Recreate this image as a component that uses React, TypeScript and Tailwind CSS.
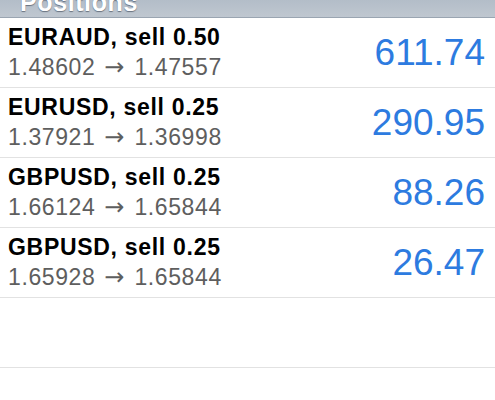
const positions = [
  { symbol: 'EURAUD', side: 'sell', volume: '0.50', open: '1.48602', current: '1.47557', profit: '611.74' },
  { symbol: 'EURUSD', side: 'sell', volume: '0.25', open: '1.37921', current: '1.36998', profit: '290.95' },
  { symbol: 'GBPUSD', side: 'sell', volume: '0.25', open: '1.66124', current: '1.65844', profit: '88.26' },
  { symbol: 'GBPUSD', side: 'sell', volume: '0.25', open: '1.65928', current: '1.65844', profit: '26.47' },
];

export default function App() {
  return (
    <div className="w-[495px] h-[400px] overflow-hidden bg-white font-['Liberation_Sans',Arial,sans-serif]">
      {/* section header, scrolled so the title is cut off at the top */}
      <div className="h-[18px] overflow-hidden bg-gradient-to-b from-[#b3bdc8] to-[#bfc7d0] border-b border-[#9aa5b1] pl-[20px]">
        <div className="-mt-[10px] text-[25px] leading-[24px] font-bold text-white tracking-[0.6px] [text-shadow:0_1px_1px_rgba(70,80,95,0.7)]">
          Positions
        </div>
      </div>

      {positions.map((p, i) => (
        <div key={i} className="h-[70px] flex items-center justify-between border-b border-[#e2e2e2] pl-[8px] pr-[10px]">
          <div className="self-start pt-[6px]">
            <div className="text-[23px] leading-[26px] font-bold text-black tracking-[0.7px]">
              {p.symbol}, {p.side} {p.volume}
            </div>
            <div className="mt-[4px] text-[23px] leading-[26px] text-[#5e5e5e] tracking-[0.6px] flex items-baseline">
              <span>{p.open}</span>
              <span className="ml-[9px] mr-[10px] font-['DejaVu_Sans',sans-serif] text-[24px] leading-[26px] tracking-normal text-[#5e5e5e]">→</span>
              <span>{p.current}</span>
            </div>
          </div>
          <div className="text-[37px] leading-[40px] text-[#2d7be0]">{p.profit}</div>
        </div>
      ))}

      <div className="h-[70px] border-b border-[#e2e2e2]" />
    </div>
  );
}
